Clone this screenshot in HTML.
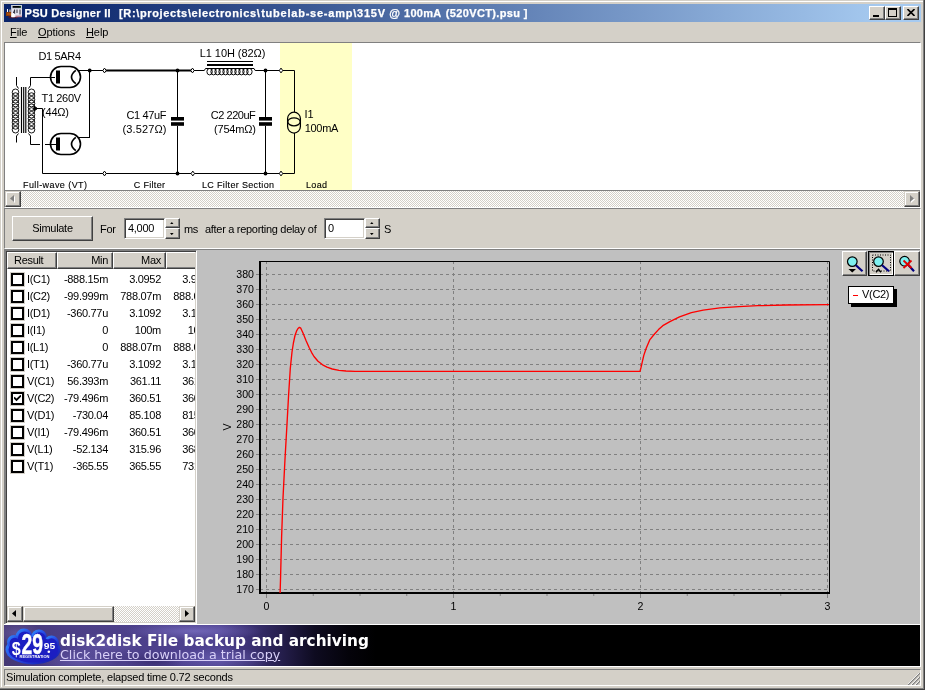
<!DOCTYPE html>
<html><head><meta charset="utf-8"><title>PSU Designer II</title>
<style>
html,body{margin:0;padding:0;}
body{width:925px;height:690px;overflow:hidden;background:#D4D0C8;position:relative;
 font-family:"Liberation Sans",sans-serif;font-size:11px;color:#000;}
.a{position:absolute;}
.t{position:absolute;white-space:nowrap;line-height:13px;height:13px;letter-spacing:-0.3px;}
.menu{letter-spacing:-0.1px;}
.r{text-align:right;}
.btn{position:absolute;background:#D4D0C8;box-sizing:border-box;border:1px solid;border-color:#fff #404040 #404040 #fff;
 box-shadow:inset -1px -1px 0 #808080, inset 1px 1px 0 #D4D0C8;}
.sbtn{position:absolute;background:#D4D0C8;box-sizing:border-box;border:1px solid;border-color:#D4D0C8 #404040 #404040 #D4D0C8;
 box-shadow:inset -1px -1px 0 #808080, inset 1px 1px 0 #fff;}
.sunk{position:absolute;background:#fff;box-sizing:border-box;border:1px solid;border-color:#808080 #fff #fff #808080;
 box-shadow:inset 1px 1px 0 #404040, inset -1px -1px 0 #D4D0C8;}
.dith{background-image:conic-gradient(#fff 25%,#D4D0C8 0 50%,#fff 0 75%,#D4D0C8 0);background-size:2px 2px;}
.hdr{position:absolute;background:#D4D0C8;box-sizing:border-box;border:1px solid;border-color:#fff #404040 #404040 #fff;
 box-shadow:inset -1px -1px 0 #808080;height:17px;top:252px;}
.cb{position:absolute;left:11px;width:13px;height:13px;box-sizing:border-box;border:2px solid #000;background:#fff;outline:1px solid #D4D0C8;}
u{text-decoration:underline;}
</style></head>
<body>
<div id="win" style="position:absolute;left:0;top:0;width:925px;height:690px;will-change:transform;">
<div class="a" style="left:0px;top:0px;width:925px;height:690px;background:#D4D0C8;"></div>
<div class="a" style="left:1px;top:1px;width:922px;height:1px;background:#FFFFFF;"></div>
<div class="a" style="left:1px;top:1px;width:1px;height:686px;background:#FFFFFF;"></div>
<div class="a" style="left:923px;top:0px;width:1px;height:689px;background:#808080;"></div>
<div class="a" style="left:924px;top:0px;width:1px;height:690px;background:#404040;"></div>
<div class="a" style="left:0px;top:688px;width:924px;height:1px;background:#808080;"></div>
<div class="a" style="left:0px;top:689px;width:925px;height:1px;background:#404040;"></div>
<div class="a" style="left:4px;top:4px;width:917px;height:18px;background:linear-gradient(90deg,#0A246A 0%,#0A246A 4%,#A6CAF0 96%,#A6CAF0 100%);"></div>
<svg class="a" style="left:4px;top:4px" width="20" height="18" viewBox="4 4 20 18">
<rect x="6" y="12" width="6.5" height="4" fill="#8B3A0A"/><rect x="7" y="13" width="4" height="2" fill="#A8500E"/>
<rect x="7" y="9" width="1" height="3" fill="#fff"/><rect x="9" y="9.5" width="2" height="2.5" fill="#9a8c86"/>
<rect x="8.5" y="16" width="9" height="2.2" fill="#4a1830"/>
<rect x="11.2" y="5" width="10.8" height="12" fill="#E4E2EE"/>
<rect x="11.2" y="5" width="10.8" height="3.8" fill="#C6CCD8"/>
<rect x="12.6" y="6" width="8.2" height="1.8" fill="#000"/><rect x="19.6" y="6" width="1" height="1.8" fill="#0a5a1a"/>
<path d="M14.6 9.5V14 M13.4 13L14.6 10 M17 9.5V13 M20 9.5V14.5" stroke="#2a2a3a" stroke-width="1" fill="none"/>
<rect x="11.5" y="13.5" width="3.2" height="3.8" fill="#fff"/>
<rect x="15.5" y="15.6" width="6.2" height="1.6" fill="#C08090"/>
</svg>
<div class="t title" style="left:24.5px;top:7px;color:#fff;font-weight:bold;font-size:11px;letter-spacing:0.3px;-webkit-text-stroke:0.25px #fff;">PSU Designer II</div>
<div class="t title" style="left:119px;top:7px;color:#fff;font-weight:bold;font-size:11px;letter-spacing:0.647px;-webkit-text-stroke:0.25px #fff;">[R:\projects\electronics\</div>
<div class="t title" style="left:261.2px;top:7px;color:#fff;font-weight:bold;font-size:11px;letter-spacing:0.766px;-webkit-text-stroke:0.25px #fff;">tubelab-se-amp\315V</div>
<div class="t title" style="left:389.3px;top:7px;color:#fff;font-weight:bold;font-size:11px;letter-spacing:0px;-webkit-text-stroke:0.25px #fff;">@</div>
<div class="t title" style="left:404px;top:7px;color:#fff;font-weight:bold;font-size:11px;letter-spacing:0.264px;-webkit-text-stroke:0.25px #fff;">100mA</div>
<div class="t title" style="left:445.8px;top:7px;color:#fff;font-weight:bold;font-size:11px;letter-spacing:0.349px;-webkit-text-stroke:0.25px #fff;">(520VCT).psu ]</div>
<div class="btn" style="left:869px;top:6px;width:16px;height:14px;"></div>
<div class="a" style="left:873px;top:15px;width:6px;height:2px;background:#000"></div>
<div class="btn" style="left:885px;top:6px;width:16px;height:14px;"></div>
<div class="a" style="left:888px;top:8px;width:9px;height:9px;box-sizing:border-box;border:1px solid #000;border-top-width:2px"></div>
<div class="btn" style="left:903px;top:6px;width:16px;height:14px;"></div>
<svg class="a" style="left:907px;top:9px" width="8" height="7" viewBox="0 0 8 7"><path d="M0.5 0 L7.5 7 M7.5 0 L0.5 7" stroke="#000" stroke-width="1.6" fill="none"/></svg>
<div class="t menu" style="left:10px;top:26px;"><u>F</u>ile</div>
<div class="t menu" style="left:38px;top:26px;"><u>O</u>ptions</div>
<div class="t menu" style="left:86px;top:26px;"><u>H</u>elp</div>
<div class="a" style="left:4px;top:42px;width:917px;height:166px;box-sizing:border-box;border:1px solid;border-color:#808080 #fff #fff #808080;background:#fff;"></div>
<div class="a" style="left:280px;top:43px;width:72px;height:147px;background:#FFFFC6;"></div>
<svg class="a" style="left:5px;top:43px" width="915" height="147" viewBox="5 43 915 147" font-family="Liberation Sans, sans-serif" font-size="11" fill="#000"><g stroke="#000" stroke-width="1" fill="none" stroke-linecap="butt"><g stroke-width="0.9"><circle cx="15.5" cy="92.30" r="3.3"/><circle cx="15.5" cy="96.04" r="3.3"/><circle cx="15.5" cy="99.78" r="3.3"/><circle cx="15.5" cy="103.52" r="3.3"/><circle cx="15.5" cy="107.26" r="3.3"/><circle cx="15.5" cy="111.00" r="3.3"/><circle cx="15.5" cy="114.74" r="3.3"/><circle cx="15.5" cy="118.48" r="3.3"/><circle cx="15.5" cy="122.22" r="3.3"/><circle cx="15.5" cy="125.96" r="3.3"/><circle cx="15.5" cy="129.70" r="3.3"/></g><g stroke-width="0.9"><circle cx="31.5" cy="92.30" r="3.3"/><circle cx="31.5" cy="96.04" r="3.3"/><circle cx="31.5" cy="99.78" r="3.3"/><circle cx="31.5" cy="103.52" r="3.3"/><circle cx="31.5" cy="107.26" r="3.3"/><circle cx="31.5" cy="111.00" r="3.3"/><circle cx="31.5" cy="114.74" r="3.3"/><circle cx="31.5" cy="118.48" r="3.3"/><circle cx="31.5" cy="122.22" r="3.3"/><circle cx="31.5" cy="125.96" r="3.3"/><circle cx="31.5" cy="129.70" r="3.3"/></g><path d="M21.5 87V133 M23.7 87V133 M25.8 87V133" stroke-width="1.15"/><path d="M16.5 77V85.5L18.5 88.5 M16.5 142.5V136L18.5 133.5"/><path d="M55 77.5H30.5V85.5L28.5 88.5"/><path d="M28.5 133.5L30.5 136V144.5H40 M45 144.5H56"/><path d="M37 108.5H42.5V173.5H103"/><path d="M34 106L37.5 108.5L34 111Z" fill="#000"/><rect x="50.5" y="66.5" width="30" height="21" rx="10.5" ry="10.5" stroke-width="1.6"/><rect x="56" y="70.5" width="4" height="13" fill="#000" stroke="none"/><path d="M75.8 70.3Q67.2 77 75.8 83.7" stroke-width="1.7"/><rect x="50.5" y="133.5" width="30" height="21" rx="10.5" ry="10.5" stroke-width="1.6"/><rect x="56" y="137.5" width="4" height="13" fill="#000" stroke="none"/><path d="M75.8 137.3Q67.2 144 75.8 150.7" stroke-width="1.7"/><path d="M79 70.5H103 M79 137.5H90 M89.5 70.5V137.5"/><path d="M106 70.5H191" stroke-width="2"/><path d="M194 70.5H204.3L205.5 68.5H254L255.2 70.5H280 M282.5 70.5H294.5V112"/><path d="M106 173.5H191 M194.5 173.5H280 M282.5 173.5H294.5V133"/><path d="M177.5 70.5V117 M177.5 126V173.5 M265.5 70.5V117 M265.5 126V173.5"/><g stroke-width="0.95"><ellipse cx="209.60" cy="71.7" rx="2.7" ry="3.2"/><ellipse cx="213.58" cy="71.7" rx="2.7" ry="3.2"/><ellipse cx="217.56" cy="71.7" rx="2.7" ry="3.2"/><ellipse cx="221.54" cy="71.7" rx="2.7" ry="3.2"/><ellipse cx="225.52" cy="71.7" rx="2.7" ry="3.2"/><ellipse cx="229.50" cy="71.7" rx="2.7" ry="3.2"/><ellipse cx="233.48" cy="71.7" rx="2.7" ry="3.2"/><ellipse cx="237.46" cy="71.7" rx="2.7" ry="3.2"/><ellipse cx="241.44" cy="71.7" rx="2.7" ry="3.2"/><ellipse cx="245.42" cy="71.7" rx="2.7" ry="3.2"/><ellipse cx="249.40" cy="71.7" rx="2.7" ry="3.2"/></g><path d="M207 61.5H253"/><path d="M207 65H253" stroke-width="2"/><rect x="287.6" y="112.2" width="12.8" height="20.8" rx="6.4" ry="6.4" stroke-width="1.25"/><ellipse cx="294" cy="121.8" rx="6.2" ry="4" stroke-width="1.2"/><path d="M102.8 70.5L104.5 68.1L106.2 70.5L104.5 72.9Z" fill="#fff"/><path d="M190.8 70.5L192.5 68.1L194.2 70.5L192.5 72.9Z" fill="#fff"/><path d="M279.3 70.5L281 68.1L282.7 70.5L281 72.9Z" fill="#fff"/><path d="M102.8 173.5L104.5 171.1L106.2 173.5L104.5 175.9Z" fill="#fff"/><path d="M191.10000000000002 173.5L192.8 171.1L194.5 173.5L192.8 175.9Z" fill="#fff"/><path d="M279.3 173.5L281 171.1L282.7 173.5L281 175.9Z" fill="#fff"/></g><circle cx="89.7" cy="70.5" r="1.9" fill="#000"/><circle cx="177.5" cy="70.5" r="1.9" fill="#000"/><circle cx="265.5" cy="70.5" r="1.9" fill="#000"/><circle cx="177.5" cy="173.5" r="1.9" fill="#000"/><circle cx="265.5" cy="173.5" r="1.9" fill="#000"/><rect x="171" y="117" width="13" height="3.6" fill="#000"/><rect x="171" y="122.2" width="13" height="3.6" fill="#000"/><rect x="259" y="117" width="13" height="3.6" fill="#000"/><rect x="259" y="122.2" width="13" height="3.6" fill="#000"/><text x="38.5" y="59.5" textLength="42.5" lengthAdjust="spacing">D1 5AR4</text><text x="41.5" y="101.5" textLength="39.5" lengthAdjust="spacing">T1 260V</text><text x="42" y="115.5" textLength="27" lengthAdjust="spacing">(44&#937;)</text><text x="126.5" y="118.5" textLength="40" lengthAdjust="spacing">C1 47uF</text><text x="122.5" y="132.5" textLength="44" lengthAdjust="spacing">(3.527&#937;)</text><text x="199.8" y="57" textLength="65.5" lengthAdjust="spacing">L1 10H (82&#937;)</text><text x="210.8" y="118.5" textLength="45" lengthAdjust="spacing">C2 220uF</text><text x="214" y="132.5" textLength="42" lengthAdjust="spacing">(754m&#937;)</text><text x="304.5" y="117.7" >I1</text><text x="304.8" y="132.4" textLength="33.5" lengthAdjust="spacing">100mA</text><text x="23" y="188" font-size="9" stroke="#000" stroke-width="0.12" textLength="64" lengthAdjust="spacing">Full-wave (VT)</text><text x="133.8" y="188" font-size="9" stroke="#000" stroke-width="0.12" textLength="31.2" lengthAdjust="spacing">C Filter</text><text x="202" y="188" font-size="9" stroke="#000" stroke-width="0.12" textLength="72" lengthAdjust="spacing">LC Filter Section</text><text x="306" y="188" font-size="9" stroke="#000" stroke-width="0.12" textLength="21" lengthAdjust="spacing">Load</text></svg>
<div class="a" style="left:5px;top:190px;width:915px;height:1px;background:#808080;"></div>
<div class="a dith" style="left:5px;top:191px;width:915px;height:16px;"></div>
<div class="sbtn" style="left:5px;top:191px;width:16px;height:16px;"></div>
<svg class="a" style="left:10px;top:195px" width="5" height="8" viewBox="0 0 5 8"><path d="M5 1V8L1 4.5Z" fill="#fff"/><path d="M4 0V7L0 3.5Z" fill="#808080"/></svg>
<div class="sbtn" style="left:904px;top:191px;width:16px;height:16px;"></div>
<svg class="a" style="left:910px;top:195px" width="5" height="8" viewBox="0 0 5 8"><path d="M1 1V8L5 4.5Z" fill="#fff"/><path d="M0 0V7L4 3.5Z" fill="#808080"/></svg>
<div class="a" style="left:4px;top:208px;width:917px;height:41px;box-sizing:border-box;border:1px solid;border-color:#808080 #fff #fff #808080;"></div>
<div class="btn" style="left:12px;top:216px;width:81px;height:25px;"></div>
<div class="t" style="left:12px;top:222px;width:81px;text-align:center;">Simulate</div>
<div class="t" style="left:100px;top:223px;">For</div>
<div class="sunk" style="left:124px;top:218px;width:41px;height:21px;"></div>
<div class="t" style="left:128px;top:222px;">4,000</div>
<div class="btn" style="left:165px;top:218px;width:15px;height:10px;"></div>
<div class="btn" style="left:165px;top:228px;width:15px;height:11px;"></div>
<svg class="a" style="left:170px;top:221.7px" width="3.6" height="2.2" viewBox="0 0 5 3"><path d="M0 3H5L2.5 0Z" fill="#000"/></svg>
<svg class="a" style="left:170px;top:233px" width="3.6" height="2.2" viewBox="0 0 5 3"><path d="M0 0H5L2.5 3Z" fill="#000"/></svg>
<div class="t" style="left:184px;top:223px;">ms</div>
<div class="t" style="left:205px;top:223px;">after a reporting delay of</div>
<div class="sunk" style="left:324px;top:218px;width:41px;height:21px;"></div>
<div class="t" style="left:328px;top:222px;">0</div>
<div class="btn" style="left:365px;top:218px;width:15px;height:10px;"></div>
<div class="btn" style="left:365px;top:228px;width:15px;height:11px;"></div>
<svg class="a" style="left:370px;top:221.7px" width="3.6" height="2.2" viewBox="0 0 5 3"><path d="M0 3H5L2.5 0Z" fill="#000"/></svg>
<svg class="a" style="left:370px;top:233px" width="3.6" height="2.2" viewBox="0 0 5 3"><path d="M0 0H5L2.5 3Z" fill="#000"/></svg>
<div class="t" style="left:384px;top:223px;">S</div>
<div class="sunk" style="left:5px;top:250px;width:192px;height:374px;"></div>
<div class="a" style="left:7px;top:252px;width:188px;height:17px;background:#D4D0C8;overflow:hidden;">
</div>
<div class="hdr" style="left:7px;width:50px;line-height:15px;padding-top:0px;letter-spacing:-0.3px;padding-left:6px;">Result</div>
<div class="hdr" style="left:57px;width:56px;line-height:15px;padding-top:0px;letter-spacing:-0.3px;padding-right:4px;text-align:right;">Min</div>
<div class="hdr" style="left:113px;width:53px;line-height:15px;padding-top:0px;letter-spacing:-0.3px;padding-right:4px;text-align:right;">Max</div>
<div class="hdr" style="left:166px;width:29px;border-right:none;box-shadow:inset 0 -1px 0 #808080;"></div>
<div class="a" style="left:6px;top:269px;width:189px;height:337px;overflow:hidden;">
<div class="cb" style="left:5px;top:4px;"></div>
<div class="t" style="left:21px;top:4px;">I(C1)</div>
<div class="t r" style="left:40px;top:4px;width:62px;">-888.15m</div>
<div class="t r" style="left:100px;top:4px;width:55px;">3.0952</div>
<div class="t r" style="left:149px;top:4px;width:59px;">3.9833</div>
<div class="cb" style="left:5px;top:21px;"></div>
<div class="t" style="left:21px;top:21px;">I(C2)</div>
<div class="t r" style="left:40px;top:21px;width:62px;">-99.999m</div>
<div class="t r" style="left:100px;top:21px;width:55px;">788.07m</div>
<div class="t r" style="left:149px;top:21px;width:59px;">888.07m</div>
<div class="cb" style="left:5px;top:38px;"></div>
<div class="t" style="left:21px;top:38px;">I(D1)</div>
<div class="t r" style="left:40px;top:38px;width:62px;">-360.77u</div>
<div class="t r" style="left:100px;top:38px;width:55px;">3.1092</div>
<div class="t r" style="left:149px;top:38px;width:59px;">3.1096</div>
<div class="cb" style="left:5px;top:55px;"></div>
<div class="t" style="left:21px;top:55px;">I(I1)</div>
<div class="t r" style="left:40px;top:55px;width:62px;">0</div>
<div class="t r" style="left:100px;top:55px;width:55px;">100m</div>
<div class="t r" style="left:149px;top:55px;width:59px;">100m</div>
<div class="cb" style="left:5px;top:72px;"></div>
<div class="t" style="left:21px;top:72px;">I(L1)</div>
<div class="t r" style="left:40px;top:72px;width:62px;">0</div>
<div class="t r" style="left:100px;top:72px;width:55px;">888.07m</div>
<div class="t r" style="left:149px;top:72px;width:59px;">888.07m</div>
<div class="cb" style="left:5px;top:89px;"></div>
<div class="t" style="left:21px;top:89px;">I(T1)</div>
<div class="t r" style="left:40px;top:89px;width:62px;">-360.77u</div>
<div class="t r" style="left:100px;top:89px;width:55px;">3.1092</div>
<div class="t r" style="left:149px;top:89px;width:59px;">3.1096</div>
<div class="cb" style="left:5px;top:106px;"></div>
<div class="t" style="left:21px;top:106px;">V(C1)</div>
<div class="t r" style="left:40px;top:106px;width:62px;">56.393m</div>
<div class="t r" style="left:100px;top:106px;width:55px;">361.11</div>
<div class="t r" style="left:149px;top:106px;width:59px;">361.05</div>
<div class="cb" style="left:5px;top:123px;"></div>
<svg class="a" style="left:8px;top:126px" width="7" height="7" viewBox="0 0 7 7"><path d="M0 2.5L2.5 5L7 0.5" stroke="#000" stroke-width="1.8" fill="none"/></svg>
<div class="t" style="left:21px;top:123px;">V(C2)</div>
<div class="t r" style="left:40px;top:123px;width:62px;">-79.496m</div>
<div class="t r" style="left:100px;top:123px;width:55px;">360.51</div>
<div class="t r" style="left:149px;top:123px;width:59px;">360.59</div>
<div class="cb" style="left:5px;top:140px;"></div>
<div class="t" style="left:21px;top:140px;">V(D1)</div>
<div class="t r" style="left:40px;top:140px;width:62px;">-730.04</div>
<div class="t r" style="left:100px;top:140px;width:55px;">85.108</div>
<div class="t r" style="left:149px;top:140px;width:59px;">815.15</div>
<div class="cb" style="left:5px;top:157px;"></div>
<div class="t" style="left:21px;top:157px;">V(I1)</div>
<div class="t r" style="left:40px;top:157px;width:62px;">-79.496m</div>
<div class="t r" style="left:100px;top:157px;width:55px;">360.51</div>
<div class="t r" style="left:149px;top:157px;width:59px;">360.59</div>
<div class="cb" style="left:5px;top:174px;"></div>
<div class="t" style="left:21px;top:174px;">V(L1)</div>
<div class="t r" style="left:40px;top:174px;width:62px;">-52.134</div>
<div class="t r" style="left:100px;top:174px;width:55px;">315.96</div>
<div class="t r" style="left:149px;top:174px;width:59px;">368.09</div>
<div class="cb" style="left:5px;top:191px;"></div>
<div class="t" style="left:21px;top:191px;">V(T1)</div>
<div class="t r" style="left:40px;top:191px;width:62px;">-365.55</div>
<div class="t r" style="left:100px;top:191px;width:55px;">365.55</div>
<div class="t r" style="left:149px;top:191px;width:59px;">731.10</div>
</div>
<div class="a dith" style="left:7px;top:606px;width:188px;height:16px;"></div>
<div class="sbtn" style="left:7px;top:606px;width:16px;height:16px;"></div>
<svg class="a" style="left:12px;top:610px" width="5" height="8" viewBox="0 0 5 8"><path d="M4 0V7L0 3.5Z" fill="#000"/></svg>
<div class="sbtn" style="left:179px;top:606px;width:16px;height:16px;"></div>
<svg class="a" style="left:185px;top:610px" width="5" height="8" viewBox="0 0 5 8"><path d="M0 0V7L4 3.5Z" fill="#000"/></svg>
<div class="sbtn" style="left:23px;top:606px;width:91px;height:16px;"></div>
<div class="a" style="left:4px;top:249px;width:917px;height:1px;background:#808080;"></div>
<div class="a" style="left:4px;top:249px;width:1px;height:376px;background:#808080;"></div>
<div class="a" style="left:197px;top:250px;width:723px;height:374px;background:#C0C0C0;"></div>
<div class="a" style="left:4px;top:624px;width:917px;height:1px;background:#FFFFFF;"></div>
<div class="a" style="left:920px;top:249px;width:1px;height:376px;background:#FFFFFF;"></div>
<svg class="a" style="left:197px;top:249px" width="723" height="375" viewBox="197 249 723 375" font-family="Liberation Sans, sans-serif" font-size="10.6" fill="#000"><g stroke="#808080" stroke-width="1" stroke-dasharray="3 3" fill="none"><path d="M260 589.5H829"/><path d="M260 574.5H829"/><path d="M260 559.5H829"/><path d="M260 544.5H829"/><path d="M260 529.5H829"/><path d="M260 514.5H829"/><path d="M260 499.5H829"/><path d="M260 484.5H829"/><path d="M260 469.5H829"/><path d="M260 454.5H829"/><path d="M260 439.5H829"/><path d="M260 424.5H829"/><path d="M260 409.5H829"/><path d="M260 394.5H829"/><path d="M260 379.5H829"/><path d="M260 364.5H829"/><path d="M260 349.5H829"/><path d="M260 334.5H829"/><path d="M260 319.5H829"/><path d="M260 304.5H829"/><path d="M260 289.5H829"/><path d="M260 274.5H829"/><path d="M266.5 261V592"/><path d="M453.5 261V592"/><path d="M640.5 261V592"/><path d="M827.5 261V592"/></g><path d="M260 261.5H829.5V593" stroke="#000" stroke-width="1" fill="none"/><path d="M260 261V594 M259 593H830" stroke="#000" stroke-width="2" fill="none"/><path d="M256 589.5H259 M256 574.5H259 M256 559.5H259 M256 544.5H259 M256 529.5H259 M256 514.5H259 M256 499.5H259 M256 484.5H259 M256 469.5H259 M256 454.5H259 M256 439.5H259 M256 424.5H259 M256 409.5H259 M256 394.5H259 M256 379.5H259 M256 364.5H259 M256 349.5H259 M256 334.5H259 M256 319.5H259 M256 304.5H259 M256 289.5H259 M256 274.5H259 M266.5 594V598 M313.25 594V596 M360.0 594V596 M406.75 594V596 M453.5 594V598 M500.25 594V596 M547.0 594V596 M593.75 594V596 M640.5 594V598 M687.25 594V596 M734.0 594V596 M780.75 594V596 M827.5 594V598" stroke="#808080" stroke-width="1" fill="none"/><text x="254" y="593.1" text-anchor="end">170</text><text x="254" y="578.1" text-anchor="end">180</text><text x="254" y="563.1" text-anchor="end">190</text><text x="254" y="548.1" text-anchor="end">200</text><text x="254" y="533.1" text-anchor="end">210</text><text x="254" y="518.1" text-anchor="end">220</text><text x="254" y="503.1" text-anchor="end">230</text><text x="254" y="488.1" text-anchor="end">240</text><text x="254" y="473.1" text-anchor="end">250</text><text x="254" y="458.1" text-anchor="end">260</text><text x="254" y="443.1" text-anchor="end">270</text><text x="254" y="428.1" text-anchor="end">280</text><text x="254" y="413.1" text-anchor="end">290</text><text x="254" y="398.1" text-anchor="end">300</text><text x="254" y="383.1" text-anchor="end">310</text><text x="254" y="368.1" text-anchor="end">320</text><text x="254" y="353.1" text-anchor="end">330</text><text x="254" y="338.1" text-anchor="end">340</text><text x="254" y="323.1" text-anchor="end">350</text><text x="254" y="308.1" text-anchor="end">360</text><text x="254" y="293.1" text-anchor="end">370</text><text x="254" y="278.1" text-anchor="end">380</text><text x="266.5" y="610" text-anchor="middle">0</text><text x="453.5" y="610" text-anchor="middle">1</text><text x="640.5" y="610" text-anchor="middle">2</text><text x="827.5" y="610" text-anchor="middle">3</text><text transform="translate(231,427) rotate(-90)" text-anchor="middle">V</text><path d="M280.1 593 L280.5 580 L281.6 537 L283.0 498 L285.0 459 L287.0 424 L288.6 395 L290.3 368.4 L292.0 352 L293.4 343 L295.0 335.5 L296.5 331.2 L298.0 328.5 L299.4 327.4 L300.8 328.2 L303.0 333.0 L306.0 340.5 L309.0 347.2 L311.5 352.3 L314.0 356.5 L318.0 361.2 L322.6 364.8 L327.0 367.2 L332.3 369.0 L339.0 370.3 L346.0 371.0 L355.0 371.3 L640.0 371.3 L641.0 367.5 L641.9 363.7 L643.8 355.4 L646.2 348.3 L649.7 339.9 L654.5 334.0 L658.5 329.6 L662.8 325.7 L669.9 321.6 L679.5 316.9 L691.4 312.6 L703.2 310.2 L719.9 307.8 L738.9 306.6 L757.9 305.7 L786.5 305.0 L829.0 304.6" stroke="#FF0000" stroke-width="1.35" fill="none" stroke-linejoin="round"/></svg>
<div class="btn" style="left:842px;top:251px;width:25px;height:25px;"></div>
<div class="a" style="left:868px;top:251px;width:26px;height:25px;box-sizing:border-box;border:1px solid #000;background:#D4D0C8;box-shadow:inset 1px 1px 0 #808080, inset -1px -1px 0 #fff;"></div>
<div class="btn" style="left:894px;top:251px;width:26px;height:25px;"></div>
<svg class="a" style="left:842px;top:251px" width="78" height="25" viewBox="842 251 78 25"><circle cx="852.3" cy="261.6" r="4.8" fill="#7FF0F0" stroke="#000" stroke-width="1.2"/><path d="M855.9 265.20000000000005L862.5 271.3" stroke="#000080" stroke-width="2.2" fill="none"/><path d="M848.5 269H856L852.25 272.5Z" fill="#000"/><rect x="872.5" y="255" width="18" height="16" fill="none" stroke="#000" stroke-width="1" stroke-dasharray="1 1.5"/><circle cx="878.5" cy="261.6" r="4.8" fill="#7FF0F0" stroke="#000" stroke-width="1.2"/><path d="M882.1 265.20000000000005L889 271.3" stroke="#000080" stroke-width="2.2" fill="none"/><path d="M876 272.3L878.5 269.3L881 272.3" fill="none" stroke="#000" stroke-width="1.4"/><circle cx="904.6" cy="261.2" r="4.8" fill="#7FF0F0" stroke="#000" stroke-width="1.2"/><path d="M908.2 264.8L914 271.3" stroke="#000080" stroke-width="2.2" fill="none"/><path d="M903.5 260.5L911.5 268 M911.5 260.5L903.5 268" stroke="#E00000" stroke-width="1.8" fill="none"/></svg>
<div class="a" style="left:851px;top:289px;width:46px;height:18px;background:#000;"></div>
<div class="a" style="left:848px;top:286px;width:46px;height:18px;box-sizing:border-box;border:1px solid #000;background:#fff;"></div>
<div class="a" style="left:853px;top:295px;width:5px;height:1px;background:#FF0000;"></div>
<div class="t" style="left:862px;top:288px;font-size:11px;">V(C2)</div>
<div class="a" style="left:4px;top:625px;width:916px;height:41px;background:#000;overflow:hidden;"><div class="a" style="left:0;top:0;width:460px;height:41px;background:radial-gradient(ellipse 70px 9px at 190px 6px,rgba(140,130,215,.55),rgba(140,130,215,0) 100%),radial-gradient(ellipse 40px 12px at 100px 20px,rgba(125,115,200,.40),rgba(125,115,200,0) 100%),radial-gradient(ellipse 55px 12px at 215px 34px,rgba(125,115,200,.45),rgba(125,115,200,0) 100%),radial-gradient(ellipse 30px 10px at 150px 36px,rgba(40,30,90,.5),rgba(40,30,90,0) 100%),radial-gradient(ellipse 40px 14px at 75px 36px,rgba(120,110,195,.45),rgba(120,110,195,0) 100%),radial-gradient(ellipse 25px 12px at 12px 8px,rgba(120,105,180,.5),rgba(120,105,180,0) 100%),linear-gradient(90deg,#453873 0px,#4B3E86 60px,#4E4290 215px,#3C3275 245px,#261F4E 276px,#0E0B20 311px,#04030A 345px,#000 372px);"></div></div>
<div class="a" style="left:920px;top:625px;width:1px;height:42px;background:#FFFFFF;"></div>
<div class="a" style="left:4px;top:666px;width:917px;height:1px;background:#FFFFFF;"></div>
<svg class="a" style="left:4px;top:626px" width="58" height="40" viewBox="4 626 58 40"><defs><linearGradient id="cg" x1="0" y1="0" x2="1" y2="1"><stop offset="0" stop-color="#2E96FF"/><stop offset="0.45" stop-color="#2A50E8"/><stop offset="1" stop-color="#1212A0"/></linearGradient></defs><g fill="url(#cg)"><ellipse cx="33" cy="649.5" rx="27.5" ry="15"/><circle cx="24" cy="637" r="8.5"/><circle cx="39" cy="637.5" r="8"/><circle cx="51.5" cy="643" r="7.5"/><circle cx="14" cy="642" r="7"/></g><g fill="#1C1EC2"><ellipse cx="33.5" cy="649.8" rx="25" ry="12.8"/><circle cx="24.5" cy="638" r="6.6"/><circle cx="39.3" cy="638.4" r="6.2"/><circle cx="51.5" cy="643.8" r="5.5"/><circle cx="14.8" cy="643" r="5.2"/></g><g fill="#fff" font-family="Liberation Sans, sans-serif" font-weight="bold"><text x="11.8" y="655" font-size="17.5" textLength="9" lengthAdjust="spacingAndGlyphs">$</text><text x="21.6" y="654.2" font-size="30" stroke="#fff" stroke-width="0.5" textLength="21.5" lengthAdjust="spacingAndGlyphs">29</text><text x="43.8" y="648.5" font-size="8.5" textLength="11.5" lengthAdjust="spacingAndGlyphs">95</text><circle cx="48.8" cy="651.8" r="1.3"/><text x="19.5" y="658" font-size="3" textLength="30" lengthAdjust="spacingAndGlyphs">REGISTRATION</text></g></svg>
<div class="t ban1" style="left:60px;top:631px;font-family:DejaVu Sans,sans-serif;font-weight:bold;font-size:15.3px;letter-spacing:0;color:#fff;line-height:20px;height:20px;">disk2disk File backup and archiving</div>
<div class="t ban2" style="left:60px;top:645.5px;font-family:DejaVu Sans,sans-serif;font-size:12.7px;letter-spacing:0;color:#D8D0F8;line-height:18px;height:18px;text-decoration:underline;">Click here to download a trial copy</div>
<div class="a" style="left:4px;top:669px;width:917px;height:17px;box-sizing:border-box;border:1px solid;border-color:#808080 #fff #fff #808080;"></div>
<div class="t status" style="left:6px;top:671px;letter-spacing:-0.2px;">Simulation complete, elapsed time 0.72 seconds</div>
<svg class="a" style="left:908px;top:673px" width="12" height="12" viewBox="0 0 12 12"><path d="M0 12L12 0 M4 12L12 4 M8 12L12 8" stroke="#808080" stroke-width="1.4" fill="none"/><path d="M-1 12L11 0 M3 12L11 4 M7 12L11 8" stroke="#fff" stroke-width="0.8" fill="none"/></svg>
</div>
</body></html>
